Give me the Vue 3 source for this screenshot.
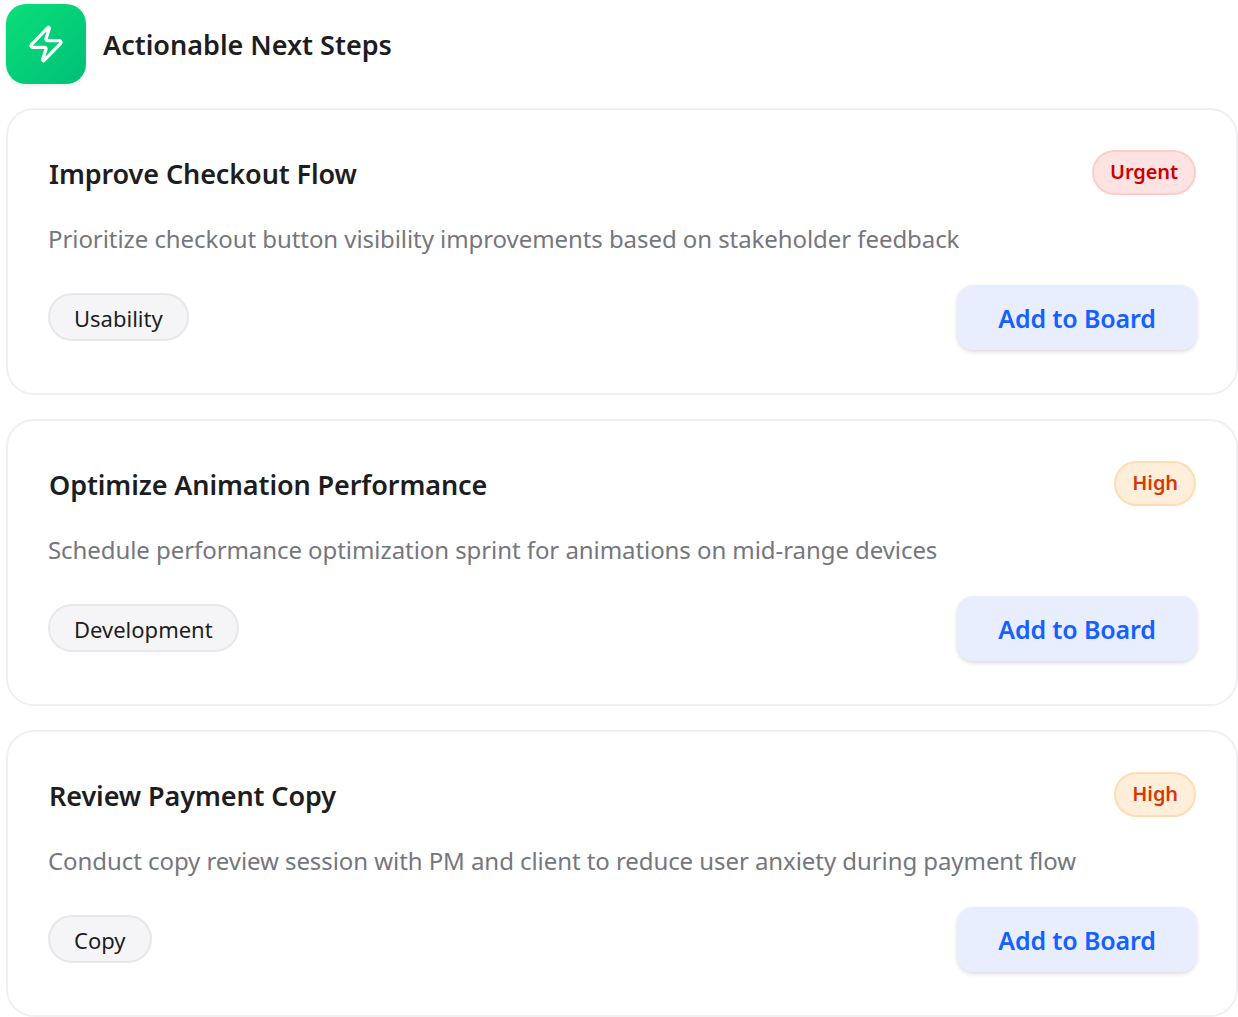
<script setup>
const steps = [
  {
    title: 'Improve Checkout Flow',
    text: 'Prioritize checkout button visibility improvements based on stakeholder feedback',
    tag: 'Usability',
    priority: 'Urgent',
  },
  {
    title: 'Optimize Animation Performance',
    text: 'Schedule performance optimization sprint for animations on mid-range devices',
    tag: 'Development',
    priority: 'High',
  },
  {
    title: 'Review Payment Copy',
    text: 'Conduct copy review session with PM and client to reduce user anxiety during payment flow',
    tag: 'Copy',
    priority: 'High',
  },
]
</script>

<template>
  <div class="page">
    <header class="header">
      <div class="header-icon">
        <svg width="40" height="40" viewBox="0 0 24 24" fill="none" stroke="#fff" stroke-width="2" stroke-linecap="round" stroke-linejoin="round">
          <path d="M4 14a1 1 0 0 1-.78-1.63l9.9-10.2a.5.5 0 0 1 .86.46l-1.92 6.02A1 1 0 0 0 13 10h7a1 1 0 0 1 .78 1.63l-9.9 10.2a.5.5 0 0 1-.86-.46l1.92-6.02A1 1 0 0 0 11 14z" />
        </svg>
      </div>
      <h2 class="header-title">Actionable Next Steps</h2>
    </header>

    <div class="list">
      <article v-for="step in steps" :key="step.title" class="card">
        <div class="card-top">
          <h3 class="card-title">{{ step.title }}</h3>
          <span :class="['badge', `badge-${step.priority.toLowerCase()}`]">{{ step.priority }}</span>
        </div>
        <p class="card-text">{{ step.text }}</p>
        <div class="card-bottom">
          <span class="tag">{{ step.tag }}</span>
          <button class="add-btn">Add to Board</button>
        </div>
      </article>
    </div>
  </div>
</template>

<style>
body {
  background: #fff;
}
</style>

<style scoped>
.page {
  width: 1238px;
  height: 1017px;
  box-sizing: border-box;
  padding: 4px 0 0 6px;
  font-family: "Noto Sans", sans-serif;
  overflow: hidden;
}

.header {
  display: flex;
  align-items: center;
  gap: 17px;
  margin-bottom: 24px;
}

.header-icon {
  width: 80px;
  height: 80px;
  border-radius: 20px;
  background: linear-gradient(135deg, #0adf78, #00bf78);
  box-shadow: 0 2px 4px rgba(0, 0, 0, 0.08);
  display: flex;
  align-items: center;
  justify-content: center;
}

.header-title {
  margin: 0;
  font-size: 27px;
  font-weight: 600;
  color: #1d1d1f;
}

.list {
  display: flex;
  flex-direction: column;
  gap: 24px;
}

.card {
  width: 1232px;
  height: 287px;
  box-sizing: border-box;
  border: 2px solid #f0f0f2;
  border-radius: 28px;
  padding: 40px 40px 43px;
  background: #fff;
  display: flex;
  flex-direction: column;
}

.card-top {
  display: flex;
  justify-content: space-between;
  align-items: center;
}

.card-title {
  margin: 2px 0 0 1px;
  font-size: 27px;
  font-weight: 600;
  letter-spacing: -0.1px;
  color: #1d1d1f;
}

.badge {
  box-sizing: border-box;
  height: 45px;
  display: flex;
  align-items: center;
  padding: 0 16px 2px;
  border-radius: 23px;
  border: 2px solid;
  font-size: 20px;
  font-weight: 600;
  letter-spacing: -0.1px;
}

.badge-urgent {
  background: #ffe3e3;
  border-color: #ffcccc;
  color: #cc0000;
}

.badge-high {
  background: #ffeeda;
  border-color: #ffdcb4;
  color: #d13b0a;
}

.card-text {
  margin: 24px 0 0;
  font-size: 24px;
  line-height: 40px;
  letter-spacing: -0.07px;
  color: #76767e;
}

.card-bottom {
  margin-top: auto;
  display: flex;
  justify-content: space-between;
  align-items: center;
}

.tag {
  box-sizing: border-box;
  height: 48px;
  margin-bottom: 1px;
  display: flex;
  align-items: center;
  padding: 2px 24px 0;
  border-radius: 24px;
  border: 2px solid #e8e8ea;
  background: #f5f5f7;
  font-size: 22px;
  color: #1d1d1f;
}

.add-btn {
  width: 240px;
  height: 65px;
  margin-right: -1px;
  border: none;
  border-radius: 16px;
  background: #e8eefd;
  box-shadow: 0 2px 4px rgba(0, 0, 0, 0.14);
  color: #1560ff;
  font-family: inherit;
  font-size: 25px;
  font-weight: 600;
  letter-spacing: -0.15px;
}
</style>
